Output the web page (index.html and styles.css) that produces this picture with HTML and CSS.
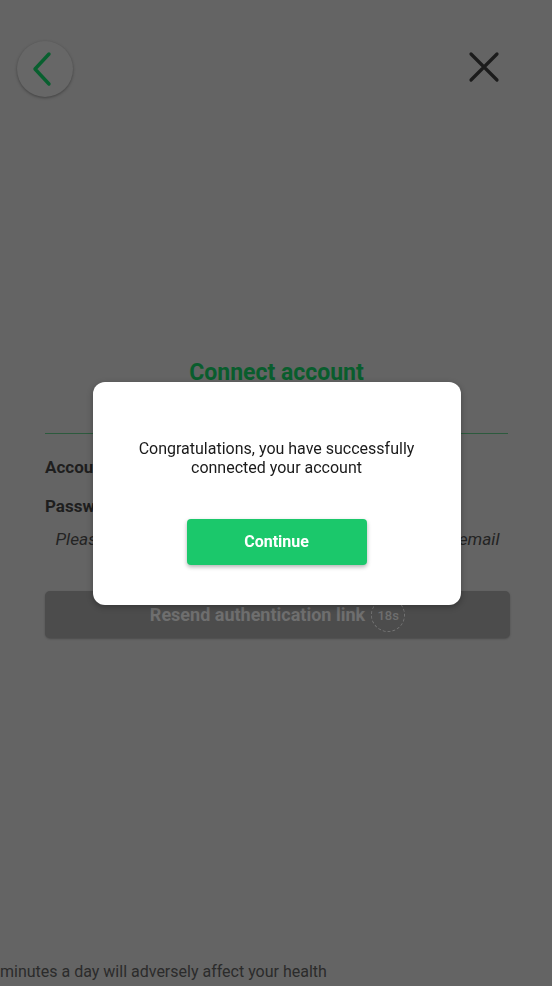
FILE: index.html
```html
<!DOCTYPE html>
<html lang="en">
    <head>
        <meta charset="UTF-8" />
        <meta name="viewport" content="width=device-width, initial-scale=1.0" />
        <title>Connect account</title>
        <link rel="stylesheet" href="styles.css">
    </head>

    <body>
        <div class="page">
            <div class="topBar">
                <button class="backBtn">
                    <svg width="22" height="36" viewBox="0 0 22 36">
                        <path d="M17 3 L3 18 L17 33" fill="none" stroke="#08602f" stroke-width="3.4" stroke-linecap="round" stroke-linejoin="round" />
                    </svg>
                </button>
                <button class="closeBtn">
                    <svg width="32" height="32" viewBox="0 0 32 32">
                        <path d="M3 3 L29 29 M29 3 L3 29" fill="none" stroke="#1b1b1b" stroke-width="3.2" stroke-linecap="round" />
                    </svg>
                </button>
            </div>

            <div class="content">
                <h1 class="title">Connect account</h1>
                <p class="label">Account</p>
                <p class="label second">Password</p>
                <p class="hint">Please click on the authentication link we sent to your email</p>
                <div class="resend">
                    <span>Resend authentication link</span>
                    <span class="timer">18s</span>
                </div>
            </div>

            <div class="notice">
                <p>minutes a day will adversely affect your health</p>
            </div>
        </div>

        <div class="overlay">
            <div class="modal">
                <p class="modalText">Congratulations, you have successfully connected your account</p>
                <button class="continueBtn">Continue</button>
            </div>
        </div>
    </body>
</html>
```

FILE: styles.css
```css
body {
    margin: 0;
    background-color: #646464;
    font-family: Roboto, "Liberation Sans", sans-serif;
}
.page {
    height: 986px;
    display: flex;
    flex-direction: column;
    overflow: hidden;
}
.topBar {
    display: flex;
    justify-content: space-between;
    align-items: flex-start;
    padding: 41px 52px 0 17px;
}
.backBtn {
    width: 56px;
    height: 56px;
    border: none;
    border-radius: 50%;
    background-color: #676767;
    box-shadow: 0 1px 3px rgba(0, 0, 0, 0.35);
    display: flex;
    align-items: center;
    justify-content: center;
    padding: 0 4px 0 0;
}
.closeBtn {
    width: 32px;
    height: 32px;
    border: none;
    background: none;
    padding: 0;
    margin-top: 10px;
}
.closeBtn svg,
.backBtn svg {
    display: block;
}
.content {
    padding: 0 42px 0 45px;
}
.title {
    margin: 264px 2px 0 0;
    font-size: 23px;
    line-height: 24px;
    font-weight: 700;
    text-align: center;
    color: #095d2d;
    padding-bottom: 48px;
    border-bottom: 1px solid #2c5a3d;
}
.label {
    margin: 22px 0 0;
    font-size: 17px;
    line-height: 22px;
    font-weight: 700;
    color: #1e1e1e;
}
.label.second {
    margin-top: 17px;
}
.hint {
    margin: 11px -20px 0;
    font-size: 17.3px;
    line-height: 22px;
    font-style: italic;
    text-align: center;
    color: #232323;
    white-space: nowrap;
}
.resend {
    margin-top: 41px;
    height: 47px;
    border-radius: 5px;
    background-color: #4c4c4c;
    box-shadow: 0 1px 2px rgba(0, 0, 0, 0.25);
    display: flex;
    align-items: center;
    justify-content: center;
    gap: 6px;
    font-size: 18px;
    font-weight: 700;
    color: #6f6f6f;
}
.timer {
    width: 32px;
    height: 32px;
    border: 1px dashed #747474;
    border-radius: 50%;
    display: flex;
    align-items: center;
    justify-content: center;
    font-size: 13px;
    font-weight: 500;
    margin-top: 1px;
}
.notice {
    margin-top: auto;
    padding-bottom: 4px;
}
.notice p {
    margin: 0;
    font-size: 16px;
    line-height: 20px;
    color: #2b2b2b;
    white-space: nowrap;
}
.overlay {
    position: fixed;
    top: 0;
    left: 0;
    right: 0;
    bottom: 0;
    display: flex;
    align-items: center;
    justify-content: center;
}
.modal {
    width: 368px;
    box-sizing: border-box;
    padding: 57px 40px 40px;
    background-color: #fff;
    border-radius: 12px;
    box-shadow: 0 2px 6px rgba(0, 0, 0, 0.3);
    display: flex;
    flex-direction: column;
    align-items: center;
    margin-left: 1px;
}
.modalText {
    margin: 0;
    font-size: 16px;
    line-height: 19px;
    text-align: center;
    color: #1a1a1a;
}
.continueBtn {
    margin-top: 42px;
    width: 180px;
    height: 46px;
    border: none;
    border-radius: 4px;
    background-color: #1bc86b;
    box-shadow: 0 2px 4px rgba(0, 0, 0, 0.3);
    font-family: Roboto, "Liberation Sans", sans-serif;
    font-size: 16px;
    font-weight: 700;
    color: #fff;
}
```
